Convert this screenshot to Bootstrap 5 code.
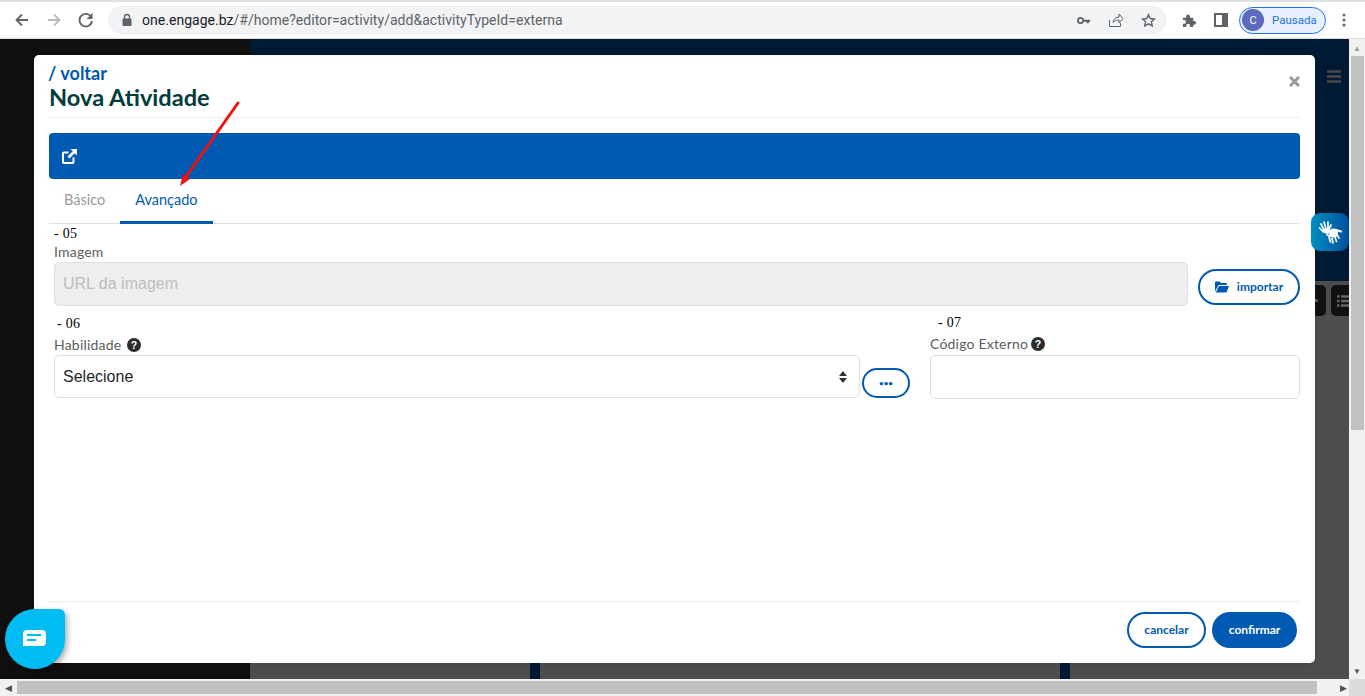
<!DOCTYPE html>
<html lang="pt">
<head>
<meta charset="utf-8">
<title>Nova Atividade</title>
<link href="https://cdn.jsdelivr.net/npm/bootstrap@5.3.0/dist/css/bootstrap.min.css" rel="stylesheet">
<style>
html,body{margin:0;height:696px;width:1365px;overflow:hidden;background:#fff;font-family:"Lato","Noto Sans",sans-serif}
.chrome-bar{height:39px;border-top:2px solid #dee1e6;border-bottom:1px solid #dadce0;background:#fff;padding:0 0 0 12px}
.chrome-nav{width:20px;height:20px;margin-right:12px;flex:none}
.omni{width:1059px;height:28px;border-radius:14px;background:#f1f3f4;padding:0 11px 0 13px;font:14px "Roboto",sans-serif;letter-spacing:.025px;color:#5f6368;flex:none}
.omni b{font-weight:400;color:#202124}
.omni-lock{margin-right:9px}
.gap-17{margin-left:17px}
.gap-15{margin-left:15px}
.profile-pill{height:27px;width:87px;border:1px solid #1a73e8;border-radius:14px;background:#e8f0fe;color:#1a73e8;font:11.5px "Roboto",sans-serif;padding-left:2px;margin:0 16px 0 11px;gap:8px;flex:none}
.avatar{width:22px;height:22px;border-radius:50%;background:#5c6bc0;color:#fff;font-size:11px}
.stage{height:640px;width:1349px;background:#4d4d4d}
.bg-left{width:250px;background:#0f0f0f}
.bg-navy{height:242px;background:#001a33;padding:31px 8px 0 0}
.bg-tiles{padding-top:4px;gap:5px}
.bg-tile{height:31px;background:#111;border-radius:5px}
.tile-a{width:30px;padding-right:8px}
.tile-b{width:18px;border-radius:5px 0 0 5px;padding-left:6px}
.bg-strip{width:10px;background:#001a33}
.bg-foot{height:16px}
.foot-span{width:520px}
.foot-end{width:279px}
.vscroll{width:16px;height:640px;background:#f1f1f1}
.vthumb{height:374px;margin:0 1px 0 2px;background:#c1c1c1}
.sarrow{height:17px;color:#a3a3a3;font-size:8px}
.sarrow-down{color:#505050}
.hscroll{height:17px;background:#f1f1f1}
.hthumb{height:13px;flex:1;background:#c1c1c1}
.harrow{width:17px;font-size:9px;color:#505050}
.harrow-end{width:32px;padding-right:2px}
.corner{width:16px;height:17px;background:#dcdcdc}
.dialog{left:34px;top:16px;width:1281px;height:608px;border:0;border-radius:5px;background:#fff;padding:0 15px}
.back-link{font-size:18px;line-height:19px;font-weight:700;color:#005ab1;margin:9px 0 0 -1px;text-decoration:none}
.dialog-title{font-size:23.600px;line-height:29px;font-weight:700;color:#033c3c;margin:0;padding-bottom:5px;border-bottom:1px solid #eee}
.close-x{right:15px;top:21px}
.banner{height:46px;margin-top:15px;background:#005ab1;border-radius:4px;padding-left:13px}
.tab-row{height:45px;border-bottom:1px solid #dee2e6}
.tab-item{font-size:14.500px;padding:0 15px;height:45px;line-height:42px;color:#9a9a9a;text-decoration:none;border-bottom:3px solid transparent}
.tab-on{color:#005ab1;border-bottom-color:#005ab1}
.fields{padding:0 0 0 5px;flex:1}
.num{font:14px/16px "Liberation Serif",serif;color:#000;letter-spacing:.3px}
.num-top{margin-top:2px}
.lbl{font-size:14px;line-height:17px;color:#5c5c5c;letter-spacing:.2px}
.lbl-first{margin:1px 0 2px}
.lbl-mid{margin:4px 0 2px}
.lbl-mid-b{margin:4px 0 3px}
.help-ic{margin-left:6px;vertical-align:-2px}
.help-ic-b{margin-left:3px;vertical-align:-2px}
.text-in{height:44px;border:1px solid #e0e0e0;border-radius:5px;font:16px "Liberation Sans",sans-serif;padding:0 8px}
.text-in:disabled{background:#eee;opacity:1}
.text-in:disabled::placeholder{color:#bdbdbd}
.sel-in{height:43px;width:806px;flex:none;border:1px solid #e0e0e0;border-radius:5px;font:16px "Liberation Sans",sans-serif;padding:0 8px;color:#212529;background-image:url("data:image/svg+xml,%3Csvg xmlns='http://www.w3.org/2000/svg' viewBox='0 0 10 12'%3E%3Cpath d='M5 0l4 5H1zM5 12L1 7h8z' fill='%23333'/%3E%3C/svg%3E");background-position:right 11px center;background-size:10px 12px}
.pill-btn{border:2px solid #005ab1;border-radius:19px;color:#005ab1;background:#fff;font-size:12px;font-weight:700;padding:0}
.pill-solid{background:#005ab1;color:#fff}
.import-btn{width:102px;height:36px;flex:none;margin:7px 0 0 2px}
.more-btn{width:48px;height:30px;margin-left:2px;flex:none;font-size:8px;letter-spacing:0}
.foot-btn{height:36px;width:79px}
.foot-btn.pill-solid{width:85px}
.row-fields{margin-top:9px}
.col-left{width:876px;flex:none;padding:1px 0 0 0}
.num-06{padding-left:3px}
.col-right{width:370px;flex:none;padding:0}
.num-07{padding-left:8px}
.foot{height:62px;border-top:1px solid #eee;padding:10px 3px 0 0;gap:6px}
.chat-bubble{left:5px;top:570px;width:60px;height:60px;padding:0 2px 2px 0;background:#00bcf2;border-radius:50% 6px 50% 50%;box-shadow:2px 3px 6px rgba(0,0,0,.35)}
.vl-widget{right:16px;top:174px;width:38px;height:38px;border-radius:9px;background:linear-gradient(90deg,#008fbf,#004f9f)}
.arrow-mark{left:0;top:0;pointer-events:none}
</style>
</head>
<body>
<div class="chrome-bar d-flex align-items-center">
  <svg class="chrome-nav" viewBox="0 0 20 20"><path d="M16 10H5M10 4.500 4.500 10l5.500 5.500" fill="none" stroke="#5f6368" stroke-width="1.800"/></svg>
  <svg class="chrome-nav" viewBox="0 0 20 20"><path d="M4 10h11M10 4.500l5.500 5.500-5.500 5.500" fill="none" stroke="#b8babc" stroke-width="1.800"/></svg>
  <svg class="chrome-nav" viewBox="0 0 20 20"><path d="M15.500 7.500A6.300 6.300 0 1 0 16 11" fill="none" stroke="#5f6368" stroke-width="1.800"/><path d="M16.500 3v6h-6z" fill="#5f6368"/></svg>
  <div class="omni d-flex align-items-center">
    <svg width="12" height="14" viewBox="0 0 12 14" class="omni-lock"><rect x="1.500" y="5.500" width="9" height="7.500" rx="1" fill="#5f6368"/><path d="M3.500 6V4a2.500 2.500 0 0 1 5 0v2" fill="none" stroke="#5f6368" stroke-width="1.300"/></svg>
    <span><b>one.engage.bz</b>/#/home?editor=activity/add&amp;activityTypeId=externa</span>
    <svg class="ms-auto" width="14" height="9" viewBox="0 0 16 10"><circle cx="4" cy="5" r="3" fill="none" stroke="#5f6368" stroke-width="2"/><path d="M7 4h8v2.500h-1.500V8H11V6.500H7z" fill="#5f6368"/></svg>
    <svg class="gap-17" width="16" height="16" viewBox="0 0 16 16"><path d="M1.500 8v6.500h11V11M5 10.500C5.500 7 8 5 11 5V2l4 4.500-4 4.500V8C8.500 8 6.500 9 5 10.500z" fill="none" stroke="#5f6368"/></svg>
    <svg class="gap-17" width="15" height="15" viewBox="0 0 16 16"><path d="m8 1.800 1.900 4.100 4.500.5-3.300 3 .9 4.400L8 11.600l-4 2.200.9-4.400-3.300-3 4.500-.5z" fill="none" stroke="#5f6368" stroke-width="1.500"/></svg>
  </div>
  <svg class="gap-15" width="15" height="15" viewBox="0 0 16 16"><path d="M1 5h3.500V3.500a2 2 0 0 1 4 0V5H12v3.500h1a2 2 0 0 1 0 4h-1V15H8.500v-1.500a2 2 0 0 0-4 0V15H1v-3.500h1.200a2 2 0 0 0 0-4H1z" fill="#5f6368"/></svg>
  <svg class="gap-17" width="14" height="14" viewBox="0 0 14 14"><path d="M0 0h14v14H0z" fill="#5f6368"/><path d="M2 2h6v10H2z" fill="#fff"/></svg>
  <div class="profile-pill d-flex align-items-center"><span class="avatar d-flex align-items-center justify-content-center">C</span><span>Pausada</span></div>
  <svg width="4" height="14" viewBox="0 0 4 14"><circle cx="2" cy="2" r="1.500" fill="#5f6368"/><circle cx="2" cy="7" r="1.500" fill="#5f6368"/><circle cx="2" cy="12" r="1.500" fill="#5f6368"/></svg>
</div>

<div class="d-flex position-relative">
  <div class="stage d-flex position-relative">
    <div class="bg-left"></div>
    <div class="flex-grow-1 d-flex flex-column">
      <div class="bg-navy d-flex justify-content-end align-items-start">
        <svg width="14" height="13" viewBox="0 0 14 13"><path d="M0 1.500h14M0 6.500h14M0 11.500h14" stroke="#4a4a4a" stroke-width="2.400"/></svg>
      </div>
      <div class="bg-tiles d-flex justify-content-end flex-grow-1 align-items-start">
        <div class="bg-tile tile-a d-flex align-items-center justify-content-end"><svg width="3" height="3" viewBox="0 0 3 3"><path d="M0 0h3v3H0z" fill="#555"/></svg></div>
        <div class="bg-tile tile-b d-flex align-items-center"><svg width="12" height="12" viewBox="0 0 12 12"><path d="M0 1.500h2.500M4 1.500h8M0 6h2.500M4 6h8M0 10.500h2.500M4 10.500h8" stroke="#666" stroke-width="2.400"/></svg></div>
      </div>
      <div class="bg-foot d-flex"><div class="flex-grow-1"></div><div class="bg-strip"></div><div class="foot-span"></div><div class="bg-strip"></div><div class="foot-end"></div></div>
    </div>
  </div>
  <div class="vscroll d-flex flex-column">
    <div class="sarrow d-flex align-items-center justify-content-center">▲</div>
    <div class="vthumb"></div>
    <div class="sarrow sarrow-down d-flex align-items-center justify-content-center mt-auto">▼</div>
  </div>

  <div class="dialog position-absolute d-flex flex-column shadow-sm">
    <a class="back-link" href="#">/ voltar</a>
    <h1 class="dialog-title">Nova Atividade</h1>
    <svg class="close-x position-absolute" width="11" height="11" viewBox="0 0 11 11"><path d="M1 1l9 9M10 1l-9 9" stroke="#9a9a9a" stroke-width="3"/></svg>
    <div class="banner d-flex align-items-center">
      <svg width="15" height="15" viewBox="0 0 15 15"><path d="M11.500 8.500V13a1 1 0 0 1-1 1H2a1 1 0 0 1-1-1V4.500a1 1 0 0 1 1-1h4.500" fill="none" stroke="#fff" stroke-width="2"/><path d="M8.500 0H15v6.500l-2.300-2.300L7.500 9.500 5.500 7.500l5.300-5.300z" fill="#fff"/></svg>
    </div>
    <div class="tab-row d-flex">
      <a class="tab-item" href="#">Básico</a>
      <a class="tab-item tab-on" href="#">Avançado</a>
    </div>
    <div class="fields d-flex flex-column">
      <div class="num num-top">- 05</div>
      <div class="lbl lbl-first">Imagem</div>
      <div class="d-flex align-items-start">
        <input class="form-control text-in me-2" disabled placeholder="URL da imagem">
        <button class="btn pill-btn d-flex align-items-center justify-content-center gap-2 import-btn" type="button">
          <svg width="14" height="12" viewBox="0 0 14 12"><path d="M0 10.500V1.500a1 1 0 0 1 1-1h3.500l1.500 1.500h5a1 1 0 0 1 1 1V4H3.500L0 10.500zM3.800 5H14l-2.500 6.500H.8z" fill="#005ab1"/></svg>importar
        </button>
      </div>
      <div class="row g-0 row-fields">
        <div class="col-left d-flex flex-column">
          <div class="num num-06">- 06</div>
          <div class="lbl lbl-mid">Habilidade<svg class="help-ic" width="14" height="14" viewBox="0 0 16 16"><circle cx="8" cy="8" r="8" fill="#2b2b2b"/><text x="8" y="12.500" fill="#fff" font-size="12" font-weight="700" text-anchor="middle" font-family="Liberation Sans">?</text></svg></div>
          <div class="d-flex align-items-end">
            <select class="form-select sel-in"><option>Selecione</option></select>
            <button class="btn pill-btn more-btn" type="button">•••</button>
          </div>
        </div>
        <div class="col-right d-flex flex-column">
          <div class="num num-07">- 07</div>
          <div class="lbl lbl-mid-b">Código Externo<svg class="help-ic-b" width="14" height="14" viewBox="0 0 16 16"><circle cx="8" cy="8" r="8" fill="#2b2b2b"/><text x="8" y="12.500" fill="#fff" font-size="12" font-weight="700" text-anchor="middle" font-family="Liberation Sans">?</text></svg></div>
          <input class="form-control text-in">
        </div>
      </div>
    </div>
    <div class="foot d-flex justify-content-end align-items-start">
      <button class="btn pill-btn foot-btn" type="button">cancelar</button>
      <button class="btn pill-btn pill-solid foot-btn" type="button">confirmar</button>
    </div>
  </div>

  <div class="chat-bubble position-absolute d-flex align-items-center justify-content-center">
    <svg width="24" height="18" viewBox="0 0 24 18"><path d="M5 1h15a4 4 0 0 1 4 4v8a4 4 0 0 1-4 4H1V5a4 4 0 0 1 4-4z" fill="#fff"/><path d="M5 6h14M5 11h9" stroke="#00bcf2" stroke-width="2"/></svg>
  </div>
  <div class="vl-widget position-absolute d-flex align-items-center justify-content-center">
    <svg width="25" height="24" viewBox="0 0 25 24" fill="none" stroke="#fff" stroke-linecap="round"><path d="M3 4l3 6M6 2l2 7M10 2l0 7M13 5l-2.500 5M1.500 8l4 4" stroke-width="1.700"/><path d="M5.500 9.500l5-.5 1.500 3-3 2-3-2z" fill="#fff" stroke-width="1"/><path d="M9 15l4 1M11 17l1.500 5M14 18l1 5M17 17l1.500 4.500M19 15l2 3" stroke-width="1.700"/><circle cx="15.500" cy="13" r="4.500" fill="#fff" stroke="none"/><path d="M18 10l5 1.500" stroke-width="2.200"/></svg>
  </div>
  <svg class="arrow-mark position-absolute" width="300" height="200"><path d="M238 64 185 139" stroke="#f01010" stroke-width="3" stroke-linecap="round" fill="none"/><path d="M180 147l3-12 7 5z" fill="#f01010"/></svg>
</div>

<div class="hscroll d-flex align-items-center">
  <div class="harrow d-flex justify-content-center">◀</div>
  <div class="hthumb"></div>
  <div class="harrow harrow-end d-flex justify-content-end">▶</div>
  <div class="corner"></div>
</div>
<script src="https://cdn.jsdelivr.net/npm/bootstrap@5.3.0/dist/js/bootstrap.bundle.min.js"></script>
</body>
</html>
